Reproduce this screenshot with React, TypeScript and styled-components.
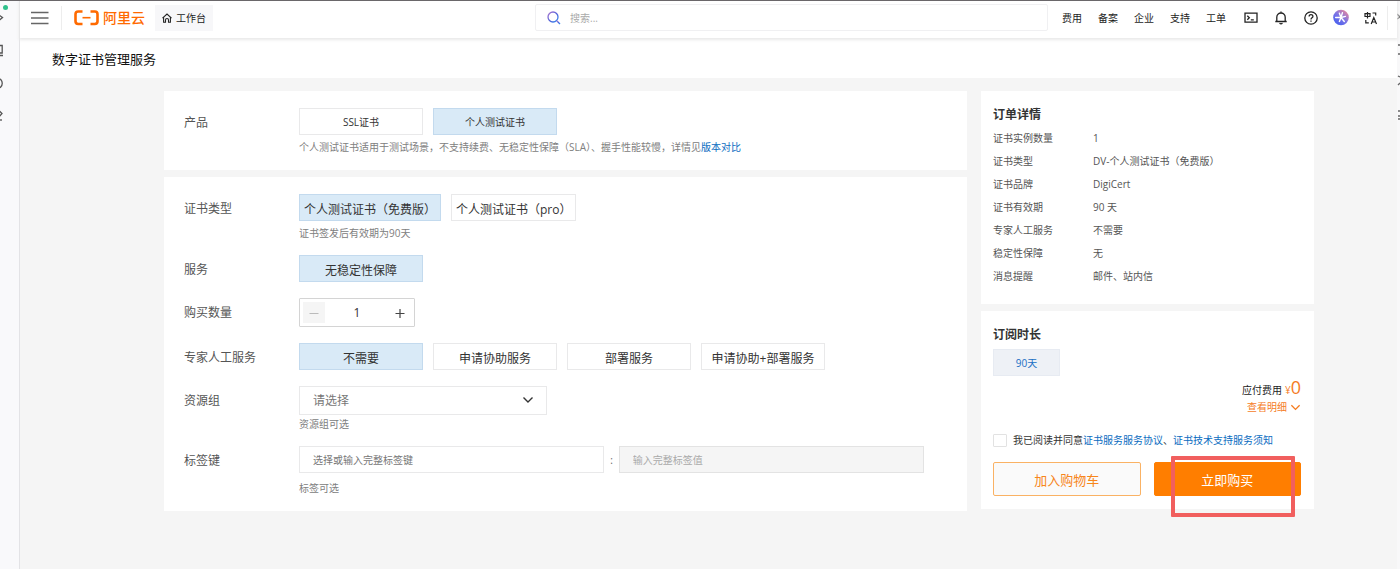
import React, { useState } from 'react';
import styled, { createGlobalStyle } from 'styled-components';

const font = '"Open Sans", "Noto Sans CJK SC", sans-serif';

const GlobalStyle = createGlobalStyle`
  * { box-sizing: border-box; }
  body { margin: 0; background: #f5f5f5; font-family: ${font}; font-size: 10px; color: #333; }
  button, input, select { font-family: inherit; margin: 0; }
  a { color: #0a6cbf; text-decoration: none; }
`;

const Page = styled.div`
  display: flex;
  min-height: 100vh;
  border-top: 1px solid #6a676a;
  overflow: hidden;
`;

const SideRail = styled.nav`
  position: relative;
  flex: none;
  width: 20px;
  padding-top: 9px;
  display: flex;
  flex-direction: column;
  gap: 18px;
  background: #f9f9fb;
  border-right: 1px solid #e3e3e6;
`;

const RailLink = styled.a`
  display: block;
  height: 15px;
  svg { display: block; }
`;

const StatusDot = styled.span`
  position: absolute;
  top: 4px;
  left: 3px;
  width: 5px;
  height: 5px;
  border-radius: 50%;
  background: #2fc08b;
`;

const EdgeRail = styled.aside`
  flex: none;
  width: 3px;
  background: #f8f8f9;
  svg { display: block; }
`;

const Main = styled.div`
  flex: 1;
  min-width: 0;
`;

const Header = styled.header`
  position: relative;
  display: flex;
  align-items: center;
  height: 37px;
  padding: 0 0 4px 11px;
  background: #fff;
  box-shadow: 0 1px 3px 1px #e9e9e9;
`;

const HeaderLeft = styled.div`
  flex: 1;
  display: flex;
  align-items: center;
`;

const MenuButton = styled.button`
  display: flex;
  padding: 0;
  border: 0;
  background: none;
`;

const Divider = styled.span`
  width: 1px;
  height: 24px;
  margin: 0 12px;
  background: #ededed;
`;

const Logo = styled.a`
  display: flex;
  align-items: center;
  gap: 4px;
  color: #ff6a00;
  font-size: 14px;
  line-height: 20px;
  font-weight: 500;
`;

const Workbench = styled.a`
  display: flex;
  align-items: center;
  gap: 4px;
  height: 26px;
  margin-left: 10px;
  padding: 0 7px;
  background: #f7f7f9;
  color: #222;
`;

const Search = styled.label`
  flex: 0 1 513px;
  display: flex;
  align-items: center;
  gap: 9px;
  height: 27px;
  padding-left: 11px;
  border: 1px solid #f0f0f2;
  border-radius: 2px;
`;

const SearchInput = styled.input`
  flex: 1;
  border: 0;
  padding: 0;
  outline: 0;
  font-size: 10px;
  background: none;
  &::placeholder { color: #aaa; }
`;

const HeaderNav = styled.nav`
  display: flex;
  align-items: center;
  gap: 16px;
  margin-left: 14px;
  a { color: #1c1c1c; white-space: nowrap; }
`;

const IconRow = styled.div`
  display: flex;
  align-items: center;
  gap: 14px;
  margin-left: 17px;
`;

const IconButton = styled.button`
  display: flex;
  justify-content: center;
  width: 16px;
  padding: 0;
  border: 0;
  background: none;
  color: #222;
`;

const HeaderEnd = styled.span`
  width: 10px;
  height: 24px;
  margin-left: 8px;
  border-left: 1px solid #ededed;
`;

const TitleBar = styled.div`
  height: 40px;
  padding-left: 32px;
  background: #fff;
`;

const PageTitle = styled.h1`
  margin: 0;
  color: #111;
  font-size: 13px;
  line-height: 42px;
  font-weight: 400;
`;

const Content = styled.main`
  display: flex;
  align-items: flex-start;
  gap: 14px;
  padding: 13px 83px 56px 144px;
`;

const FormColumn = styled.form`
  flex: 1;
  min-width: 0;
  display: flex;
  flex-direction: column;
  gap: 7px;
`;

const FormCard = styled.section`
  display: flex;
  flex-direction: column;
  gap: 16px;
  padding: 17px 20px;
  background: #fff;
`;

const Row = styled.div`
  display: flex;
`;

const Label = styled.label`
  flex: none;
  width: 115px;
  height: 27px;
  color: #555;
  font-size: 12px;
  line-height: 30px;
`;

const Control = styled.div`
  flex: 1;
  min-width: 0;
`;

const Options = styled.div`
  display: flex;
  gap: 10px;
`;

const Option = styled.button<{ $active?: boolean; $small?: boolean }>`
  min-width: 124px;
  height: 27px;
  padding: ${p => (p.$small ? 0 : 2)}px 4px 0;
  border: 1px solid ${p => (p.$active ? '#c3daee' : '#e9e9ea')};
  background: ${p => (p.$active ? '#d9eaf7' : '#fff')};
  color: #333;
  font-size: ${p => (p.$small ? 10 : 12)}px;
  white-space: nowrap;
`;

const Hint = styled.p<{ $top: number }>`
  margin: ${p => p.$top}px 0 -1px;
  color: #808080;
  line-height: 14px;
`;

const Stepper = styled.div`
  display: flex;
  align-items: center;
  justify-content: space-between;
  width: 116px;
  height: 29px;
  padding: 0 3px;
  border: 1px solid #d4d4d4;
  border-radius: 1px;
`;

const StepButton = styled.button`
  display: flex;
  align-items: center;
  justify-content: center;
  width: 22px;
  height: 21px;
  padding: 0;
  border: 0;
  background: #fff;
  color: #444;
  &:disabled { background: #f5f5f5; color: #bbb; }
`;

const StepValue = styled.input`
  width: 40px;
  border: 0;
  padding: 0;
  outline: 0;
  color: #333;
  font-size: 12px;
  text-align: center;
`;

const SelectWrap = styled.div`
  position: relative;
  width: 248px;
  height: 29px;
  svg { position: absolute; right: 13px; top: 8px; pointer-events: none; }
`;

const Select = styled.select`
  appearance: none;
  width: 100%;
  height: 100%;
  padding: 0 13px;
  border: 1px solid #e9e9ea;
  background: #fff;
  color: #777;
  font-size: 12px;
`;

const TagFields = styled.div`
  display: flex;
  align-items: center;
  gap: 6px;
  margin-right: 23px;
  color: #666;
`;

const TextField = styled.input`
  flex: 1;
  min-width: 0;
  height: 27px;
  padding: 0 13px;
  border: 1px solid #e9e9ea;
  background: #fff;
  font-size: 10px;
  &::placeholder { color: #777; }
  &:disabled { background: #f5f5f5; border-color: #e3e3e3; }
  &:disabled::placeholder { color: #aaa; }
`;

const SummaryColumn = styled.aside`
  flex: none;
  width: 333px;
  display: flex;
  flex-direction: column;
  gap: 7px;
`;

const SummaryCard = styled.section`
  padding: 12px 13px 13px 12px;
  background: #fff;
`;

const SummaryTitle = styled.h2`
  margin: 0;
  color: #333;
  font-size: 12px;
  line-height: 24px;
  font-weight: 700;
`;

const DetailTable = styled.table`
  margin-bottom: 3px;
  border-collapse: collapse;
  color: #555;
  line-height: 23px;
  th, td { padding: 0; font-weight: 400; text-align: left; }
  th { width: 100px; }
`;

const Duration = styled.button`
  display: block;
  width: 67px;
  height: 27px;
  margin-top: 2px;
  padding: 0;
  border: 1px solid #e7ebf2;
  background: #eef1f6;
  color: #1a6fc4;
  font-size: 10px;
`;

const Price = styled.div`
  display: flex;
  align-items: baseline;
  justify-content: flex-end;
  gap: 3px;
  color: #222;
  line-height: 22px;
`;

const Amount = styled.span`
  color: #f57c1f;
`;

const AmountValue = styled.span`
  font-size: 18px;
`;

const DetailLink = styled.a`
  display: flex;
  align-items: center;
  justify-content: flex-end;
  gap: 3px;
  color: #f57c1f;
  line-height: 12px;
`;

const Agreement = styled.label`
  display: flex;
  align-items: center;
  margin: 18px 0 13px;
  line-height: 18px;
`;

const CheckBox = styled.input`
  appearance: none;
  width: 14px;
  height: 13px;
  margin: 0 6px 0 0;
  border: 1px solid #e2e2e2;
  border-radius: 1px;
  background: #fff;
`;

const Actions = styled.div`
  display: grid;
  grid-template-columns: 1fr 1fr;
  gap: 13px;
`;

const ActionSlot = styled.div`
  position: relative;
`;

const ActionButton = styled.button<{ $primary?: boolean }>`
  width: 100%;
  height: 34px;
  display: block;
  padding: 0;
  border: 1px solid ${p => (p.$primary ? '#ff7e00' : '#fab264')};
  border-radius: 2px;
  background: ${p => (p.$primary ? '#ff7e00' : '#fafafa')};
  color: ${p => (p.$primary ? '#fff' : '#f7861b')};
  font-size: 13px;
`;

const Highlight = styled.span`
  position: absolute;
  top: -6px;
  left: 17px;
  right: 6px;
  height: 61px;
  border: 4px solid #f15f5e;
  border-radius: 1px;
  pointer-events: none;
`;

const stroke = { fill: 'none', stroke: 'currentColor', strokeWidth: 1.3 };

const Chevron = ({ width = 12 }: { width?: number }) => (
  <svg width={width} height={width} viewBox="0 0 12 12" {...stroke} strokeWidth={1.4}>
    <path d="M1.5 3.5 6 8l4.500-4.500" />
  </svg>
);

const details = [
  ['证书实例数量', '1'],
  ['证书类型', 'DV-个人测试证书（免费版）'],
  ['证书品牌', 'DigiCert'],
  ['证书有效期', '90 天'],
  ['专家人工服务', '不需要'],
  ['稳定性保障', '无'],
  ['消息提醒', '邮件、站内信'],
];

const railIcons = ['M-4 3 2.500 7.500-3 12', 'M-3 2.500H2.200V10H-4M-1 12.500H3', 'M-3 2A5.200 5.200 0 0 1-3 12.500', 'M-4 4 0 2.500 2 4.500-1 8M1 10V12'];

interface ChoiceProps {
  items: string[];
  initial?: number;
  small?: boolean;
}

function Choices({ items, initial = 0, small }: ChoiceProps) {
  const [selected, setSelected] = useState(initial);
  return (
    <Options>
      {items.map((item, i) => (
        <Option key={item} type="button" $active={i === selected} $small={small} aria-pressed={i === selected} onClick={() => setSelected(i)}>
          {item}
        </Option>
      ))}
    </Options>
  );
}

function TopHeader() {
  return (
    <Header>
      <HeaderLeft>
        <MenuButton aria-label="菜单">
          <svg width="18" height="14" viewBox="0 0 18 14" {...stroke} stroke="#666"><path d="M0 1.500h17.500M0 7h17.500M0 12.500h17.500" /></svg>
        </MenuButton>
        <Divider />
        <Logo href="#">
          <svg width="25" height="16" viewBox="0 0 25 16" fill="none" stroke="#ff6a00">
            <path d="M8.500 1.500H4.200Q1.500 1.500 1.500 4.200V11.300Q1.500 14 4.200 14H8.500M16.500 1.500H20.800Q23.500 1.500 23.500 4.200V11.300Q23.500 14 20.800 14H16.500" strokeWidth="2.600" />
            <path d="M8.500 7.700h8" strokeWidth="1.600" />
          </svg>
          阿里云
        </Logo>
        <Workbench href="#">
          <svg width="10" height="10" viewBox="0 0 10 10" {...stroke} strokeWidth={1.1}>
            <path d="M.5 5.200 5 1l4.500 4.200M1.600 4.500V9.200H3.500V7a1.500 1.500 0 0 1 3 0V9.200H8.400V4.500" />
          </svg>
          工作台
        </Workbench>
      </HeaderLeft>
      <Search>
        <svg width="14" height="14" viewBox="0 0 14 14" fill="none" stroke="url(#lens)" strokeWidth="1.300">
          <defs><linearGradient id="lens" x1="0" y1="0" x2="1" y2="1"><stop offset="0" stopColor="#b07ad0" /><stop offset=".5" stopColor="#5561d8" /><stop offset="1" stopColor="#2f8df0" /></linearGradient></defs>
          <circle cx="6" cy="6" r="5" /><path d="m9.700 9.700 3.300 3.300" />
        </svg>
        <SearchInput aria-label="搜索" placeholder="搜索..." />
      </Search>
      <HeaderNav>
        {['费用', '备案', '企业', '支持', '工单'].map(t => <a key={t} href="#">{t}</a>)}
      </HeaderNav>
      <IconRow>
        <IconButton aria-label="终端">
          <svg width="14" height="14" viewBox="0 0 14 14" {...stroke}><path d="M1 2.200h12v9H1zM3.300 4.700l2 2-2 2M6.800 8.800h3" /></svg>
        </IconButton>
        <IconButton aria-label="通知">
          <svg width="14" height="14" viewBox="0 0 14 14" {...stroke}><path d="M7 .5v1.500M1.300 10.500h11.400M2.800 10.500V6.200a4.200 4.200 0 0 1 8.400 0v4.300M5.500 12.300q1.500 1 3 0" /></svg>
        </IconButton>
        <IconButton aria-label="帮助">
          <svg width="14" height="14" viewBox="0 0 14 14" {...stroke}><circle cx="7" cy="7" r="6.200" /><path d="M5.100 5.500C5.100 3 8.900 3 8.900 5.400 8.900 6.800 7 6.800 7 8.400M7 9.500v1.200" /></svg>
        </IconButton>
        <IconButton aria-label="AI 助理">
          <svg width="17" height="17" viewBox="0 0 17 17">
            <defs><linearGradient id="orb" x1=".1" y1="1" x2=".9" y2="0"><stop offset="0" stopColor="#3d5cf0" /><stop offset=".5" stopColor="#7b74e6" /><stop offset="1" stopColor="#f58a94" /></linearGradient></defs>
            <circle cx="8.500" cy="8.500" r="8.300" fill="url(#orb)" />
            <path d="M2.800 8.500h5.700L13.200 7.300M8.500 8.500 6.800 4M8.500 8.500l1.500-5M8.500 8.500l-1.700 4.200M8.500 8.500l3.500 4.300" stroke="#fff" strokeWidth="1.500" strokeLinecap="round" fill="none" />
          </svg>
        </IconButton>
        <IconButton aria-label="语言">
          <svg width="14" height="14" viewBox="0 0 14 14" {...stroke} strokeWidth={1.2}><path d="M1 2.700h5v2.800H1zM3.500 1v6.500M8.500 2h3.200v2.500M1.800 9v2.800h3M7.200 13l2.600-6.500L12.500 13M8 11h3.800" /></svg>
        </IconButton>
      </IconRow>
      <HeaderEnd />
    </Header>
  );
}

function PurchaseForm() {
  const [count, setCount] = useState(1);
  return (
    <FormColumn>
      <FormCard>
        <Row>
          <Label as="span">产品</Label>
          <Control>
            <Choices items={['SSL证书', '个人测试证书']} initial={1} small />
            <Hint $top={5}>个人测试证书适用于测试场景，不支持续费、无稳定性保障（SLA）、握手性能较慢，详情见<a href="#">版本对比</a></Hint>
          </Control>
        </Row>
      </FormCard>
      <FormCard>
        <Row>
          <Label as="span">证书类型</Label>
          <Control>
            <Choices items={['个人测试证书（免费版）', '个人测试证书（pro）']} />
            <Hint $top={5}>证书签发后有效期为90天</Hint>
          </Control>
        </Row>
        <Row>
          <Label as="span">服务</Label>
          <Control><Choices items={['无稳定性保障']} /></Control>
        </Row>
        <Row>
          <Label htmlFor="count">购买数量</Label>
          <Stepper>
            <StepButton type="button" aria-label="减少" disabled={count <= 1} onClick={() => setCount(count - 1)}>
              <svg width="10" height="10" viewBox="0 0 10 10" {...stroke} strokeWidth={1}><path d="M.5 5.500h9" /></svg>
            </StepButton>
            <StepValue id="count" value={count} onChange={e => setCount(Number(e.target.value) || 1)} />
            <StepButton type="button" aria-label="增加" onClick={() => setCount(count + 1)}>
              <svg width="10" height="10" viewBox="0 0 10 10" {...stroke} strokeWidth={1.2}><path d="M.5 5.500h9M5 1v9" /></svg>
            </StepButton>
          </Stepper>
        </Row>
        <Row>
          <Label as="span">专家人工服务</Label>
          <Control><Choices items={['不需要', '申请协助服务', '部署服务', '申请协助+部署服务']} /></Control>
        </Row>
        <Row>
          <Label htmlFor="group">资源组</Label>
          <Control>
            <SelectWrap>
              <Select id="group"><option>请选择</option></Select>
              <Chevron />
            </SelectWrap>
            <Hint $top={2}>资源组可选</Hint>
          </Control>
        </Row>
        <Row>
          <Label htmlFor="tag">标签键</Label>
          <Control>
            <TagFields>
              <TextField id="tag" placeholder="选择或输入完整标签键" />
              :
              <TextField aria-label="标签值" placeholder="输入完整标签值" disabled />
            </TagFields>
            <Hint $top={8}>标签可选</Hint>
          </Control>
        </Row>
      </FormCard>
    </FormColumn>
  );
}

function Summary() {
  return (
    <SummaryColumn>
      <SummaryCard>
        <SummaryTitle>订单详情</SummaryTitle>
        <DetailTable>
          <tbody>
            {details.map(([name, value]) => (
              <tr key={name}><th scope="row">{name}</th><td>{value}</td></tr>
            ))}
          </tbody>
        </DetailTable>
      </SummaryCard>
      <SummaryCard>
        <SummaryTitle>订阅时长</SummaryTitle>
        <Duration type="button">90天</Duration>
        <Price>应付费用 <Amount>¥<AmountValue>0</AmountValue></Amount></Price>
        <DetailLink href="#">查看明细 <Chevron width={11} /></DetailLink>
        <Agreement>
          <CheckBox type="checkbox" />
          <span>我已阅读并同意<a href="#">证书服务服务协议</a>、<a href="#">证书技术支持服务须知</a></span>
        </Agreement>
        <Actions>
          <ActionButton type="button">加入购物车</ActionButton>
          <ActionSlot>
            <ActionButton type="button" $primary>立即购买</ActionButton>
            <Highlight />
          </ActionSlot>
        </Actions>
      </SummaryCard>
    </SummaryColumn>
  );
}

export default function App() {
  return (
    <>
      <GlobalStyle />
      <Page>
        <SideRail aria-label="侧栏">
          <StatusDot />
          {railIcons.map(d => (
            <RailLink key={d} href="#">
              <svg width="6" height="15" viewBox="0 0 6 15" {...stroke} stroke="#555"><path d={d} /></svg>
            </RailLink>
          ))}
        </SideRail>
        <Main>
          <TopHeader />
          <TitleBar><PageTitle>数字证书管理服务</PageTitle></TitleBar>
          <Content>
            <PurchaseForm />
            <Summary />
          </Content>
        </Main>
        <EdgeRail>
          <svg width="3" height="130" viewBox="0 0 3 130" {...stroke} stroke="#666"><path d="M0 13l3 3M0 18l3-2M1 44h2M1 53h2M1 75l2 1M1 84l2-2M1 110h2M1 115h2M1 118h2" /></svg>
        </EdgeRail>
      </Page>
    </>
  );
}
